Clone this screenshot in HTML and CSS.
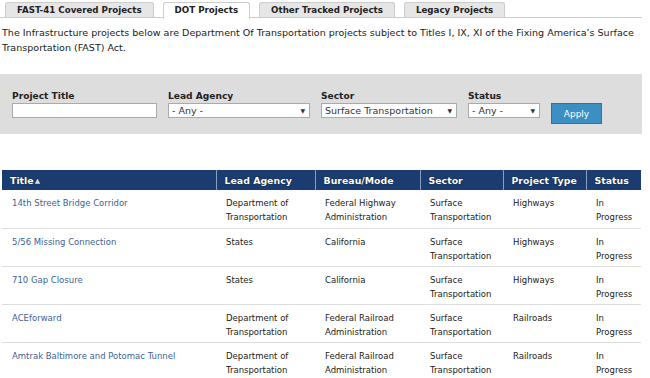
FILE: index.html
```html
<!DOCTYPE html>
<html>
<head>
    <title>DOT Projects</title>
    <link rel="stylesheet" href="styles.css">
</head>
<body>
    <ul class="tabs">
        <li>FAST-41 Covered Projects</li>
        <li class="active">DOT Projects</li>
        <li>Other Tracked Projects</li>
        <li>Legacy Projects</li>
    </ul>
    <p class="intro">The Infrastructure projects below are Department Of Transportation projects subject to Titles I, IX, XI of the Fixing America&rsquo;s Surface Transportation (FAST) Act.</p>

    <form class="filters">
        <div class="field">
            <label for="title">Project Title</label>
            <input type="text" id="title" class="text-input">
        </div>
        <div class="field">
            <label>Lead Agency</label>
            <div class="select agency"><span>- Any -</span><span class="arrow">&#9660;</span></div>
        </div>
        <div class="field">
            <label>Sector</label>
            <div class="select sector"><span>Surface Transportation</span><span class="arrow">&#9660;</span></div>
        </div>
        <div class="field">
            <label>Status</label>
            <div class="select status"><span>- Any -</span><span class="arrow">&#9660;</span></div>
        </div>
        <button type="button" class="apply">Apply</button>
    </form>

    <table class="projects">
        <colgroup>
            <col class="c-title">
            <col class="c-agency">
            <col class="c-bureau">
            <col class="c-sector">
            <col class="c-type">
            <col class="c-status">
        </colgroup>
        <thead>
            <tr>
                <th>Title<span class="sort">&#9650;</span></th>
                <th>Lead Agency</th>
                <th>Bureau/Mode</th>
                <th>Sector</th>
                <th>Project Type</th>
                <th>Status</th>
            </tr>
        </thead>
        <tbody>
            <tr>
                <td><a href="#">14th Street Bridge Corridor</a></td>
                <td>Department of Transportation</td>
                <td>Federal Highway Administration</td>
                <td>Surface Transportation</td>
                <td>Highways</td>
                <td>In Progress</td>
            </tr>
            <tr>
                <td><a href="#">5/56 Missing Connection</a></td>
                <td>States</td>
                <td>California</td>
                <td>Surface Transportation</td>
                <td>Highways</td>
                <td>In Progress</td>
            </tr>
            <tr>
                <td><a href="#">710 Gap Closure</a></td>
                <td>States</td>
                <td>California</td>
                <td>Surface Transportation</td>
                <td>Highways</td>
                <td>In Progress</td>
            </tr>
            <tr>
                <td><a href="#">ACEforward</a></td>
                <td>Department of Transportation</td>
                <td>Federal Railroad Administration</td>
                <td>Surface Transportation</td>
                <td>Railroads</td>
                <td>In Progress</td>
            </tr>
            <tr>
                <td><a href="#">Amtrak Baltimore and Potomac Tunnel</a></td>
                <td>Department of Transportation</td>
                <td>Federal Railroad Administration</td>
                <td>Surface Transportation</td>
                <td>Railroads</td>
                <td>In Progress</td>
            </tr>
        </tbody>
    </table>
</body>
</html>
```

FILE: styles.css
```css
body {
    font-family: "DejaVu Sans", Verdana, sans-serif;
    margin: 0;
    background-color: #fff;
    color: #333;
    font-size: 9px;
    width: 642px;
}

.tabs {
    list-style: none;
    margin: 2px 0 0 0;
    padding: 0 0 0 5px;
    display: flex;
    gap: 9px;
    border-bottom: 1px solid #ccc;
    height: 15px;
}

.tabs li {
    background-color: #e6e6e6;
    border: 1px solid #ccc;
    border-bottom: none;
    border-radius: 3px 3px 0 0;
    padding: 0 11px;
    font-weight: bold;
    font-size: 8.7px;
    line-height: 15px;
    color: #222;
}

.tabs li.active {
    background-color: #fff;
    height: 16px;
}

.intro {
    margin: 7px -4px 0 2px;
    font-size: 9.55px;
    line-height: 15px;
    color: #222;
}

.filters {
    margin: 19px 0 0 0;
    background-color: #ddd;
    height: 60px;
    padding: 16px 0 0 12px;
    display: flex;
    align-items: flex-start;
    box-sizing: border-box;
}

.field {
    display: flex;
    flex-direction: column;
    margin-right: 11px;
}

.field label {
    font-weight: bold;
    font-size: 9.1px;
    line-height: 13px;
    color: #222;
}

.text-input {
    width: 145px;
    height: 15px;
    box-sizing: border-box;
    border: 1px solid #aaa;
    padding: 0;
    margin: 0;
    background: #fff;
}

.select {
    height: 15px;
    box-sizing: border-box;
    border: 1px solid #aaa;
    background: #fff;
    display: flex;
    justify-content: space-between;
    align-items: center;
    padding: 0 4px 0 3px;
    font-size: 9.5px;
    color: #333;
}

.select .arrow {
    font-size: 6px;
}

.agency { width: 142px; }
.sector { width: 136px; }
.status { width: 72px; }

.apply {
    margin-top: 13px;
    width: 51px;
    height: 21px;
    background-color: #3b8fc2;
    border: 1px solid #2c75a3;
    color: #fff;
    font-family: "DejaVu Sans", Verdana, sans-serif;
    font-size: 9px;
    padding: 0;
    cursor: pointer;
}

.projects {
    margin: 36px 0 0 2px;
    border-collapse: collapse;
    width: 639px;
    table-layout: fixed;
}

.c-title { width: 214px; }
.c-agency { width: 99px; }
.c-bureau { width: 105px; }
.c-sector { width: 83px; }
.c-type { width: 83px; }
.c-status { width: 55px; }

.projects th {
    background-color: #1b3c70;
    color: #fff;
    font-weight: bold;
    font-size: 9.4px;
    text-align: left;
    height: 20px;
    padding: 0 6px 0 8px;
    border-left: 1px solid #8aa0c0;
    text-shadow: 0 0 1px #000;
    white-space: nowrap;
    overflow: hidden;
}

.projects th:first-child {
    border-left: none;
}

.sort {
    font-size: 7px;
    vertical-align: 1px;
    margin-left: 1px;
    color: #ddd;
}

.projects td {
    vertical-align: top;
    height: 38px;
    box-sizing: border-box;
    padding: 6px 4px 0 10px;
    font-size: 8.5px;
    line-height: 14px;
    border-bottom: 1px solid #ddd;
    color: #222;
}

.projects td a {
    color: #3d5f96;
    text-decoration: none;
}
```
